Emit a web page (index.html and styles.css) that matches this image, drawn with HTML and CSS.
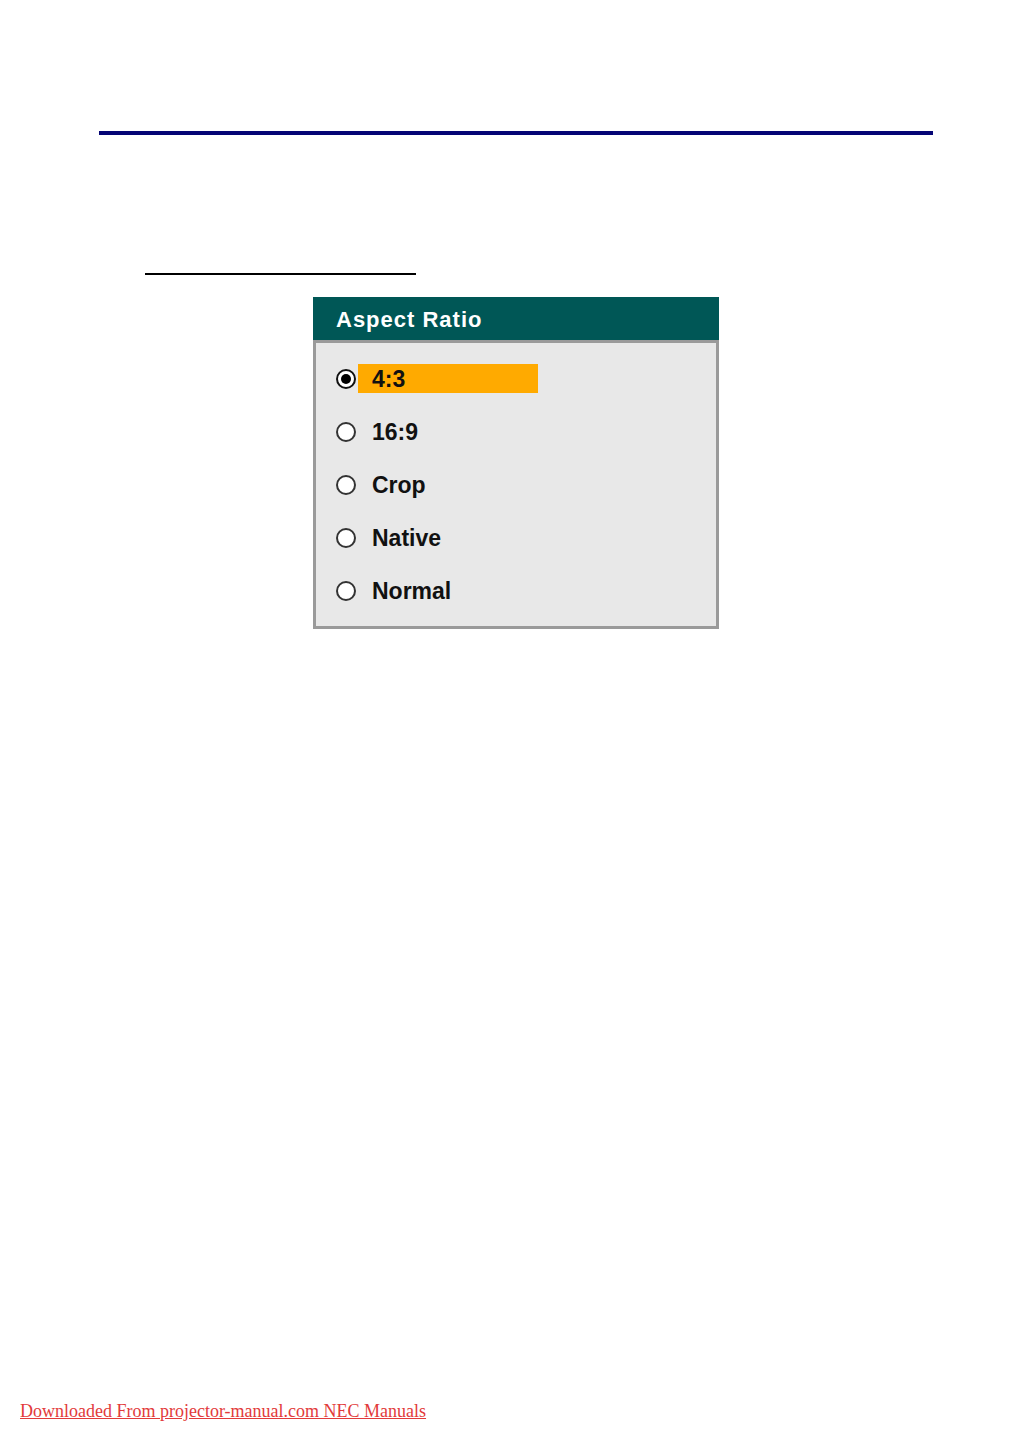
FILE: index.html
```html
<!DOCTYPE html>
<html>
<head>
<meta charset="utf-8">
<link rel="stylesheet" href="styles.css">
</head>
<body>
<div class="page">
  <div class="blue-rule"></div>
  <div class="black-rule"></div>
  <div class="dialog">
    <div class="dialog-header">Aspect Ratio</div>
    <div class="dialog-body">
      <div class="row">
        <span class="radio selected"></span>
        <span class="label highlight">4:3</span>
      </div>
      <div class="row">
        <span class="radio"></span>
        <span class="label">16:9</span>
      </div>
      <div class="row">
        <span class="radio"></span>
        <span class="label">Crop</span>
      </div>
      <div class="row">
        <span class="radio"></span>
        <span class="label">Native</span>
      </div>
      <div class="row">
        <span class="radio"></span>
        <span class="label">Normal</span>
      </div>
    </div>
  </div>
  <div class="footer"><a class="footer-link">Downloaded From projector-manual.com NEC Manuals</a></div>
</div>
</body>
</html>
```
FILE: styles.css
```css
html, body {
  margin: 0;
  padding: 0;
  background: #ffffff;
}
.page {
  width: 1030px;
  height: 1456px;
  overflow: hidden;
  padding-top: 131px;
  box-sizing: border-box;
}
.blue-rule {
  margin-left: 99px;
  width: 834px;
  height: 4px;
  background: #050575;
}
.black-rule {
  margin-top: 138px;
  margin-left: 145px;
  width: 271px;
  height: 2px;
  background: #000000;
}
.dialog {
  margin-top: 22px;
  margin-left: 313px;
  width: 406px;
  font-family: "Liberation Sans", Arial, sans-serif;
  font-weight: bold;
}
.dialog-header {
  height: 43px;
  background: #005756;
  color: #ffffff;
  font-size: 22px;
  letter-spacing: 1px;
  line-height: 46px;
  padding-left: 23px;
}
.dialog-body {
  background: #e8e8e8;
  border: 3px solid #9a9a9a;
  padding: 9px 0 9px 20px;
}
.row {
  display: flex;
  align-items: center;
  height: 53px;
}
.radio {
  width: 20px;
  height: 20px;
  box-sizing: border-box;
  border: 2px solid #333333;
  border-radius: 50%;
  background: #ffffff;
  display: flex;
  align-items: center;
  justify-content: center;
}
.radio.selected {
  border-color: #111111;
}
.radio.selected::after {
  content: "";
  width: 10px;
  height: 10px;
  border-radius: 50%;
  background: #000000;
}
.label {
  margin-left: 2px;
  width: 180px;
  height: 29px;
  box-sizing: border-box;
  padding-left: 14px;
  font-size: 23px;
  line-height: 30px;
  color: #111111;
}
.label.highlight {
  background: #ffaa00;
}
.footer {
  margin-top: 771px;
  padding-left: 20px;
  font-family: "Liberation Serif", "Times New Roman", serif;
  font-size: 18px;
  line-height: 22px;
}
.footer-link {
  color: #e23a3a;
  text-decoration: underline;
}
```
